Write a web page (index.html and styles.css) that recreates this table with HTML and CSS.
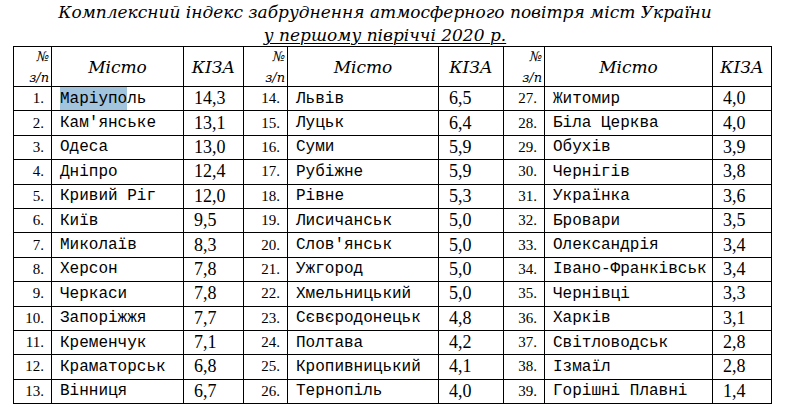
FILE: index.html
```html
<!DOCTYPE html>
<html lang="uk">
<head>
<meta charset="utf-8">
<link rel="stylesheet" href="styles.css">
</head>
<body>
<div class="page">
  <div class="title">
    <div class="t1">Комплексний індекс забруднення атмосферного повітря міст України</div>
    <div class="t2"><span class="ul">у першому півріччі 2020 р.</span></div>
  </div>
  <div class="grid">
    <div class="hn"><span class="nz1">№</span><span class="nz2">з/п</span></div><div class="hc">Місто</div><div class="hc">КІЗА</div>
    <div class="hn"><span class="nz1">№</span><span class="nz2">з/п</span></div><div class="hc">Місто</div><div class="hc">КІЗА</div>
    <div class="hn"><span class="nz1">№</span><span class="nz2">з/п</span></div><div class="hc">Місто</div><div class="hc">КІЗА</div>

    <div class="n">1.</div><div class="c"><span class="hl">Маріупо</span>ль</div><div class="v">14,3</div><div class="n">14.</div><div class="c">Львів</div><div class="v">6,5</div><div class="n">27.</div><div class="c">Житомир</div><div class="v">4,0</div>
    <div class="n">2.</div><div class="c">Кам'янське</div><div class="v">13,1</div><div class="n">15.</div><div class="c">Луцьк</div><div class="v">6,4</div><div class="n">28.</div><div class="c">Біла Церква</div><div class="v">4,0</div>
    <div class="n">3.</div><div class="c">Одеса</div><div class="v">13,0</div><div class="n">16.</div><div class="c">Суми</div><div class="v">5,9</div><div class="n">29.</div><div class="c">Обухів</div><div class="v">3,9</div>
    <div class="n">4.</div><div class="c">Дніпро</div><div class="v">12,4</div><div class="n">17.</div><div class="c">Рубіжне</div><div class="v">5,9</div><div class="n">30.</div><div class="c">Чернігів</div><div class="v">3,8</div>
    <div class="n">5.</div><div class="c">Кривий Ріг</div><div class="v">12,0</div><div class="n">18.</div><div class="c">Рівне</div><div class="v">5,3</div><div class="n">31.</div><div class="c">Українка</div><div class="v">3,6</div>
    <div class="n">6.</div><div class="c">Київ</div><div class="v">9,5</div><div class="n">19.</div><div class="c">Лисичанськ</div><div class="v">5,0</div><div class="n">32.</div><div class="c">Бровари</div><div class="v">3,5</div>
    <div class="n">7.</div><div class="c">Миколаїв</div><div class="v">8,3</div><div class="n">20.</div><div class="c">Слов'янськ</div><div class="v">5,0</div><div class="n">33.</div><div class="c">Олександрія</div><div class="v">3,4</div>
    <div class="n">8.</div><div class="c">Херсон</div><div class="v">7,8</div><div class="n">21.</div><div class="c">Ужгород</div><div class="v">5,0</div><div class="n">34.</div><div class="c">Івано-Франківськ</div><div class="v">3,4</div>
    <div class="n">9.</div><div class="c">Черкаси</div><div class="v">7,8</div><div class="n">22.</div><div class="c">Хмельницький</div><div class="v">5,0</div><div class="n">35.</div><div class="c">Чернівці</div><div class="v">3,3</div>
    <div class="n">10.</div><div class="c">Запоріжжя</div><div class="v">7,7</div><div class="n">23.</div><div class="c">Сєвєродонецьк</div><div class="v">4,8</div><div class="n">36.</div><div class="c">Харків</div><div class="v">3,1</div>
    <div class="n">11.</div><div class="c">Кременчук</div><div class="v">7,1</div><div class="n">24.</div><div class="c">Полтава</div><div class="v">4,2</div><div class="n">37.</div><div class="c">Світловодськ</div><div class="v">2,8</div>
    <div class="n">12.</div><div class="c">Краматорськ</div><div class="v">6,8</div><div class="n">25.</div><div class="c">Кропивницький</div><div class="v">4,1</div><div class="n">38.</div><div class="c">Ізмаїл</div><div class="v">2,8</div>
    <div class="n">13.</div><div class="c">Вінниця</div><div class="v">6,7</div><div class="n">26.</div><div class="c">Тернопіль</div><div class="v">4,0</div><div class="n">39.</div><div class="c">Горішні Плавні</div><div class="v">1,4</div>
  </div>
</div>
</body>
</html>
```
FILE: styles.css
```css
body {
  margin: 0;
  background: #ffffff;
}
.page {
  padding: 1px 0 0 13px;
  color: #000000;
  font-family: "DejaVu Serif", serif;
}
.title {
  width: 744px;
  padding-right: 15px;
  text-align: center;
  font-family: "DejaVu Serif", serif;
  font-style: italic;
  font-size: 17px;
  line-height: 22.5px;
}
.t1, .t2 { font-family: "DejaVu Serif", serif; }
.ul {
  text-decoration: underline;
  text-decoration-thickness: 1px;
  text-underline-offset: 2px;
}
.grid {
  display: grid;
  width: 759px;
  grid-template-columns: 38px 132px 60px 44px 151px 65px 41px 168px 59px;
  grid-template-rows: 40px repeat(13, 24.4px);
  border-top: 1px solid #000000;
  border-left: 1px solid #000000;
  box-sizing: border-box;
}
.hn, .hc, .n, .c, .v {
  border-right: 1px solid #000000;
  border-bottom: 1px solid #000000;
  white-space: nowrap;
  display: flex;
  align-items: center;
}
.hc {
  justify-content: center;
  font-family: "DejaVu Serif", serif;
  font-style: italic;
  font-size: 17px;
}
.hn {
  flex-direction: column;
  align-items: flex-end;
  justify-content: space-between;
  padding: 2px 2px 1px 0;
  font-style: italic;
  font-size: 13px;
  line-height: 15px;
}
.n {
  justify-content: flex-end;
  padding-right: 7px;
  font-family: "Liberation Serif", serif;
  font-size: 15px;
}
.c {
  padding-left: 8px;
  font-family: "Liberation Mono", monospace;
  font-size: 16px;
}
.v {
  padding-left: 10px;
  font-family: "Liberation Serif", serif;
  font-size: 18px;
}
.hl {
  background: #a3c4dd;
  padding: 3px 0 2px;
}
```
